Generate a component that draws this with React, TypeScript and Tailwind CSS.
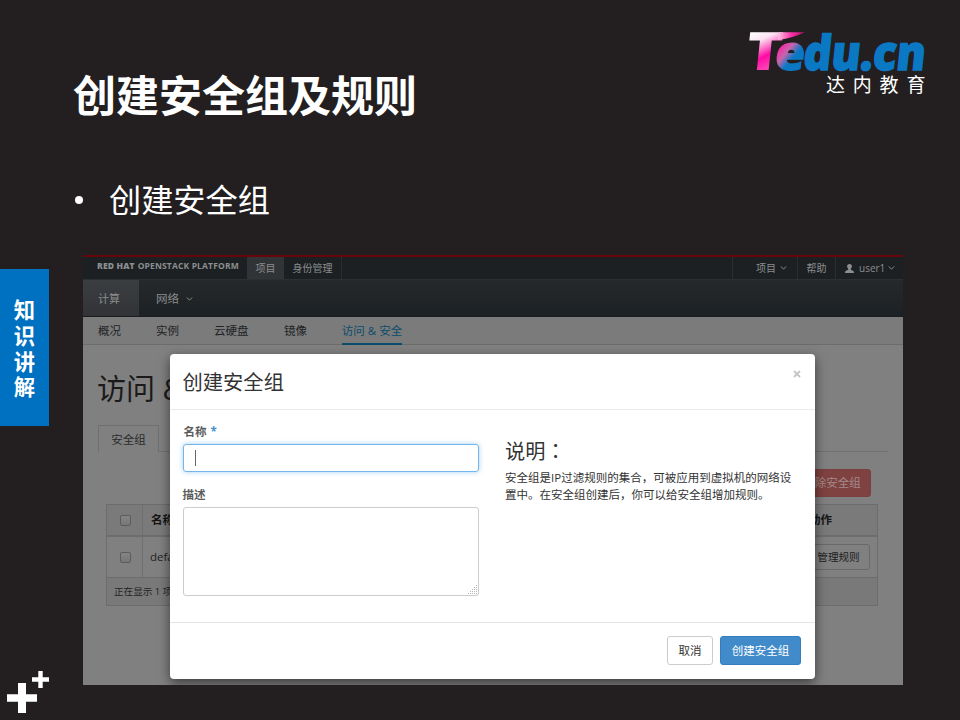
import type { ReactNode } from "react";

function Chevron({ className = "" }: { className?: string }) {
  return (
    <svg viewBox="0 0 8 6" className={`h-[6px] w-[7px] shrink-0 ${className}`} fill="none" stroke="currentColor" strokeWidth="1.1">
      <path d="M1 1.2 4 4.4 7 1.2" />
    </svg>
  );
}

function Logo() {
  return (
    <svg viewBox="0 0 190 76" className="h-[76px] w-[190px] overflow-visible">
      <defs>
        <linearGradient id="tee" gradientUnits="userSpaceOnUse" x1="6" y1="10" x2="24" y2="46">
          <stop offset="0" stopColor="#ffffff" />
          <stop offset="0.3" stopColor="#fbe3f3" />
          <stop offset="0.72" stopColor="#ff0aa5" />
          <stop offset="1" stopColor="#ff3fb4" />
        </linearGradient>
        <linearGradient id="tip" x1="0" y1="0" x2="1" y2="0">
          <stop offset="0" stopColor="#fbc0e2" />
          <stop offset="0.5" stopColor="#ff2fa8" />
          <stop offset="1" stopColor="#a8105c" />
        </linearGradient>
        <linearGradient id="ee" gradientUnits="userSpaceOnUse" x1="32" y1="26" x2="50" y2="39">
          <stop offset="0" stopColor="#ff1fa4" />
          <stop offset="0.45" stopColor="#c765ad" />
          <stop offset="0.85" stopColor="#0b78c4" />
        </linearGradient>
      </defs>
      <g transform="translate(5 0) skewX(-6)" fontFamily="'Open Sans', sans-serif" fontWeight="800">
        <text x="0" y="50" fontSize="53" fill="url(#tee)" textLength="36" lengthAdjust="spacingAndGlyphs">T</text>
        <path d="M30 12.200H56Q46 17.500 30 20Z" fill="url(#tip)" />
        <text x="29" y="49.500" fontSize="48" fill="url(#ee)" stroke="url(#ee)" strokeWidth="1" textLength="30" lengthAdjust="spacingAndGlyphs">e</text>
        <text x="57.500" y="49.500" fontSize="48" fill="#0b78c4" stroke="#0b78c4" strokeWidth="1.500" textLength="122" lengthAdjust="spacingAndGlyphs">du.cn</text>
      </g>
      <text x="81" y="72" fontSize="19" letterSpacing="7.800" fill="#fff" fontFamily="'Noto Sans CJK SC', sans-serif">达内教育</text>
    </svg>
  );
}

function Button({ className, children }: { className: string; children: ReactNode }) {
  return <button className={`flex shrink-0 items-center justify-center rounded-[3px] border ${className}`}>{children}</button>;
}

function Dashboard() {
  return (
    <div className="flex h-full flex-col bg-[#808080]">
      <nav className="flex h-6 shrink-0 border-t-2 border-[#66060b] bg-[#1c2022] text-[10px] text-[#8b8e8f]">
        <div className="flex w-[164px] items-center pb-1 pl-[14px] font-['Open_Sans'] text-[8.5px] font-bold tracking-[0.15px]">
          <span className="font-extrabold">RED HAT</span>
          <span className="ml-[3px]">OPENSTACK PLATFORM</span>
        </div>
        <div className="flex w-[37px] items-center justify-center bg-[#313436]">项目</div>
        <div className="flex w-[58px] items-center justify-center border-r border-[#2a2e30]">身份管理</div>
        <div className="ml-auto flex w-[65px] items-center border-l border-[#2a2e30] pl-[23px]">
          项目
          <Chevron className="ml-1" />
        </div>
        <div className="flex w-[38px] items-center justify-center border-l border-[#2a2e30]">帮助</div>
        <div className="flex w-[68px] items-center border-l border-[#2a2e30] pl-[9px]">
          <svg viewBox="0 0 9 9" className="mr-[5px] h-[9px] w-[9px] shrink-0" fill="currentColor">
            <path d="M4.5 0C6.200 0 6.900 1 6.900 2.300 6.900 3.500 6.300 4.300 5.800 4.800V5.800L8 6.700Q9 7.200 9 9H0Q0 7.200 1 6.700L3.200 5.800V4.800C2.700 4.300 2.100 3.500 2.100 2.300 2.100 1 2.800 0 4.500 0Z" />
          </svg>
          user1
          <Chevron className="ml-[3px]" />
        </div>
      </nav>
      <div className="flex h-[38px] shrink-0 border-t border-b border-t-[#2b3032] border-b-[#1a1d1f] bg-linear-to-b from-[#26292a] to-[#1c2125] text-[11px] text-[#8b8e8f]">
        <div className="flex w-14 items-center bg-linear-to-b from-[#3b3e41] to-[#323337] pt-0.5 pl-[15px]">计算</div>
        <div className="flex items-center pt-px pl-[17px] text-[11.5px]">
          网络
          <Chevron className="ml-[7px]" />
        </div>
      </div>
      <div className="flex h-7 shrink-0 items-stretch border-b border-[#6c6c6c] bg-[#7b7b7b] pl-[15px] text-[11.5px] text-[#202325]">
        <span className="flex w-[58px] items-center">概况</span>
        <span className="flex w-[58px] items-center">实例</span>
        <span className="flex w-[70px] items-center">云硬盘</span>
        <span className="flex w-[58px] items-center">镜像</span>
        <span className="-mb-px flex w-[60px] items-center justify-center border-b-2 border-[#0b4c6c] pt-0.5 text-[#0b4c6c]">访问 &amp; 安全</span>
      </div>
      <div className="flex flex-col px-[15px]">
        <h1 className="mt-6 -ml-px h-10 text-[29px] leading-10 text-[#1a1a1a]">访问 &amp; 安全</h1>
        <div className="mt-4 flex h-[27px]">
          <div className="flex w-[61px] items-center justify-center border border-b-0 border-[#6f6f6f] pt-0.5 text-[11.5px] text-[#2b2b2b]">安全组</div>
          <div className="flex-1 border-b border-[#707070]" />
        </div>
        <div className="mt-[17px] flex h-7 justify-end pr-[17px]">
          <Button className="w-[94px] border-[#78403f] bg-[#7f4241] pl-4 text-[11.5px] text-[#a38a8a]">删除安全组</Button>
        </div>
        <div className="mt-[7px] mr-[10px] ml-2 flex flex-col border border-[#6d6d6d] text-[11.5px] text-[#222]">
          <div className="flex h-8 items-stretch border-b-2 border-[#6d6d6d] bg-[#7a7a7a] font-bold text-[#151515]">
            <CheckCell />
            <span className="flex items-center pl-2">名称</span>
            <span className="mr-[45px] ml-auto flex items-center">动作</span>
          </div>
          <div className="flex h-[41px] items-stretch border-b border-[#6d6d6d]">
            <CheckCell />
            <span className="flex items-center pl-[7px] font-['Open_Sans']">default</span>
            <span className="mr-[7px] ml-auto flex items-center">
              <Button className="h-[26px] w-[64px] border-[#696969] pt-px pl-px text-[10.6px] text-[#1c1c1c]">管理规则</Button>
            </span>
          </div>
          <div className="flex h-[27px] items-center bg-[#797979] pt-0.5 pl-[7px] text-[9.6px] text-[#242424]">正在显示 1 项</div>
        </div>
      </div>
    </div>
  );
}

function CheckCell() {
  return (
    <span className="flex w-9 items-center justify-center border-r border-[#6f6f6f] pl-0.5">
      <span className="h-[11px] w-[11px] rounded-[2px] border border-[#5c5c5c] bg-linear-to-b from-[#858585] to-[#767676]" />
    </span>
  );
}

function Modal() {
  return (
    <div className="absolute top-[99px] left-[86.5px] flex h-[325px] w-[645px] flex-col rounded-[4px] bg-white text-[#333] shadow-[0_4px_12px_rgba(0,0,0,0.55)]">
      <header className="flex h-14 shrink-0 items-center justify-between border-b border-[#ebebeb] pr-[14px] pl-[13px] pt-px">
        <h2 className="text-[20.3px] leading-[26px]">创建安全组</h2>
        <svg viewBox="0 0 8 8" className="mb-4 h-2 w-2" stroke="#c4c4c4" strokeWidth="1.8">
          <path d="M1 1 7 7M7 1 1 7" />
        </svg>
      </header>
      <div className="flex flex-1 pl-[13px]">
        <form className="flex w-[296px] flex-col">
          <label className="mt-[14px] h-4 pl-px text-[11.5px] leading-4 font-bold text-[#5c5c5c]">
            名称 <span className="ml-px text-[#4690d0]">*</span>
          </label>
          <div className="mt-1 flex h-7 shrink-0 items-center rounded-[3px] border border-[#74b5ec] pl-[11px] shadow-[0_0_5px_rgba(102,175,233,0.6)]">
            <span className="h-4 w-px bg-[#666]" />
          </div>
          <label className="mt-[15px] h-4 text-[11.5px] leading-4 font-bold text-[#5c5c5c]">描述</label>
          <div className="mt-1 flex h-[89px] shrink-0 items-end justify-end rounded-[3px] border border-[#ccc]">
            <svg viewBox="0 0 10 10" className="h-[10px] w-[10px]" fill="#b4b4b4">
              <path d="M8 0h1v1h-1zM6 2h1v1h-1zM8 2h1v1h-1zM4 4h1v1h-1zM6 4h1v1h-1zM8 4h1v1h-1zM2 6h1v1h-1zM4 6h1v1h-1zM6 6h1v1h-1zM8 6h1v1h-1zM0 8h1v1h-1zM2 8h1v1h-1zM4 8h1v1h-1zM6 8h1v1h-1zM8 8h1v1h-1z" />
            </svg>
          </div>
        </form>
        <section className="ml-[26.5px]">
          <h3 className="mt-[26px] h-[30px] text-[20.2px] leading-[30px]">
            说明<span className="font-['Noto_Sans_CJK_TC']">：</span>
          </h3>
          <p className="mt-1 text-[11.5px] leading-[16.5px]">
            安全组是IP过滤规则的集合，可被应用到虚拟机的网络设
            <br />
            置中。在安全组创建后，你可以给安全组增加规则。
          </p>
        </section>
      </div>
      <footer className="flex h-[57px] shrink-0 items-center justify-end gap-[7px] border-t border-[#e5e5e5] pr-[13.5px] pb-px">
        <Button className="h-[29px] w-[46px] border-[#ccc] bg-white pt-px text-[11.5px] text-[#333]">取消</Button>
        <Button className="h-[29px] w-[81px] border-[#357ebd] bg-[#428bca] pt-px text-[11.5px] text-white">创建安全组</Button>
      </footer>
    </div>
  );
}

export default function App() {
  return (
    <div className="flex h-[720px] w-[960px] overflow-hidden bg-[#231f20] font-['Open_Sans','Noto_Sans_CJK_SC',sans-serif] whitespace-nowrap">
      <aside className="flex w-[49px] shrink-0 flex-col justify-between pt-[269px]">
        <div className="flex h-[157px] flex-col items-center justify-center bg-[#0070c0] pt-0.5 text-[21.3px] leading-[25.6px] font-bold text-white">
          <span>知</span>
          <span>识</span>
          <span>讲</span>
          <span>解</span>
        </div>
        <svg viewBox="0 0 49 50" className="h-[50px] w-[49px]" fill="#fff">
          <path d="M18 13h8v11.3h11v7.4H26V43h-8V31.700H7v-7.400h11z" />
          <path d="M38.300 1h4.400v6.300H49v4.400h-6.300V18h-4.400v-6.300H32V7.300h6.300z" />
        </svg>
      </aside>
      <main className="flex flex-1 flex-col pl-[26px]">
        <header className="flex h-[151px] justify-between pr-[25px]">
          <h1 className="mt-[64px] -ml-0.5 text-[43px] leading-[64px] font-bold text-white">创建安全组及规则</h1>
          <div className="mt-5">
            <Logo />
          </div>
        </header>
        <div className="mt-6 flex h-[50px] items-center text-[32.2px] leading-[50px] text-white">
          <span className="mr-[26px] h-2 w-2 rounded-full bg-white" />
          创建安全组
        </div>
        <div className="relative mt-[30px] ml-2 h-[430px] w-[820px] overflow-hidden">
          <Dashboard />
          <Modal />
        </div>
      </main>
    </div>
  );
}
